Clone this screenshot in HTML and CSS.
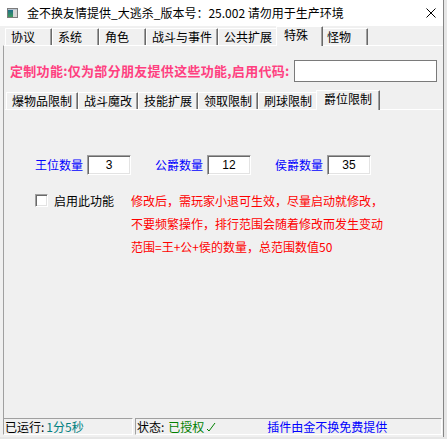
FILE: index.html
```html
<!DOCTYPE html>
<html lang="zh-CN">
<head>
<meta charset="utf-8">
<title>金不换友情提供_大逃杀_版本号：25.002 请勿用于生产环境</title>
<link rel="stylesheet" href="styles.css">
</head>
<body>
<div class="window">
  <div class="titlebar">
    <svg class="app-icon" width="11" height="10" viewBox="0 0 11 10">
      <defs>
        <linearGradient id="pane" x1="0" y1="0" x2="0" y2="1">
          <stop offset="0" stop-color="#1f6f8b"/>
          <stop offset="1" stop-color="#3f9a5a"/>
        </linearGradient>
      </defs>
      <rect x="0.5" y="0.5" width="10" height="9" fill="#e8e8e8" stroke="#7c7c7c"/>
      <rect x="1" y="1" width="9" height="1" fill="#b8c4d0"/>
      <rect x="1" y="2" width="5" height="7" fill="url(#pane)"/>
      <rect x="6" y="2" width="4" height="7" fill="#d6d6d6"/>
    </svg>
    <span class="title">金不换友情提供_大逃杀_版本号：25.002 请勿用于生产环境</span>
    <svg class="close" width="10" height="10" viewBox="0 0 10 10">
      <path d="M0.5 0.5 L9.5 9.5 M9.5 0.5 L0.5 9.5" stroke="#000" stroke-width="1" fill="none"/>
    </svg>
  </div>

  <div class="tabstrip">
    <div class="tab">协议</div>
    <div class="tab">系统</div>
    <div class="tab">角色</div>
    <div class="tab">战斗与事件</div>
    <div class="tab">公共扩展</div>
    <div class="tab is-active">特殊</div>
    <div class="tab">怪物</div>
  </div>

  <div class="page">
    <div class="custom">
      <span class="custom-label">定制功能:仅为部分朋友提供这些功能,启用代码:</span>
      <input class="code-input" type="text" value="">
    </div>

    <div class="tabstrip tabstrip--inner">
      <div class="tab">爆物品限制</div>
      <div class="tab">战斗魔改</div>
      <div class="tab">技能扩展</div>
      <div class="tab">领取限制</div>
      <div class="tab">刷球限制</div>
      <div class="tab is-active">爵位限制</div>
    </div>

    <div class="subpage">
      <div class="fields">
        <label class="field"><span class="field-label">王位数量</span><input class="num" type="text" value="3"></label>
        <label class="field"><span class="field-label">公爵数量</span><input class="num" type="text" value="12"></label>
        <label class="field"><span class="field-label">侯爵数量</span><input class="num" type="text" value="35"></label>
      </div>

      <div class="options">
        <label class="check">
          <span class="check-box"></span>
          <span>启用此功能</span>
        </label>
        <div class="notes">
          <div>修改后，需玩家小退可生效，尽量启动就修改，</div>
          <div>不要频繁操作，排行范围会随着修改而发生变动</div>
          <div>范围=王+公+侯的数量，总范围数值50</div>
        </div>
      </div>
    </div>
  </div>

  <div class="statusbar">
    <div class="status-cell status-cell--time">
      <span>已运行:</span><span class="uptime">1分5秒</span>
    </div>
    <div class="status-cell status-cell--state">
      <span>状态:</span>
      <span class="auth">已授权<svg class="tick" width="10" height="10" viewBox="0 0 10 10"><polyline points="1,7 3,9 9,1" fill="none" stroke="#008000" stroke-width="1"/></svg></span>
      <span class="credit">插件由金不换免费提供</span>
    </div>
  </div>
</div>
</body>
</html>
```

FILE: styles.css
```css
* {
  box-sizing: border-box;
}

html,
body {
  margin: 0;
}

body {
  background: #e6e6e6;
  font-family: "Noto Sans CJK SC", "Liberation Sans", sans-serif;
  font-size: 12px;
  color: #000;
}

/* window frame */
.window {
  width: 444px;
  height: 437px;
  background: #f0f0f0;
  border-right: 1px solid #858585;
  display: flex;
  flex-direction: column;
}

.titlebar {
  height: 26px;
  flex: none;
  background: #fff;
  display: flex;
  align-items: center;
  padding-left: 7px;
}

.app-icon {
  flex: none;
  margin-right: 9px;
}

.title {
  flex: 1;
  line-height: 14px;
  white-space: nowrap;
}

.close {
  flex: none;
  margin-right: 7px;
}

/* classic tab strips */
.tabstrip {
  height: 19px;
  flex: none;
  display: flex;
  align-items: flex-end;
  padding-left: 5px;
}

.tab {
  height: 17px;
  min-width: 47px;
  padding: 0 5px;
  border-top: 1px solid #fff;
  border-left: 1px solid #fff;
  border-right: 1px solid #696969;
  box-shadow: inset -1px 0 #a0a0a0;
  border-top-left-radius: 1px;
  border-top-right-radius: 1px;
  line-height: 15px;
  white-space: nowrap;
}

.tab.is-active {
  position: relative;
  z-index: 1;
  height: 20px;
  margin: 0 -2px -1px;
  padding: 0 7px;
  background: #f0f0f0;
  line-height: 16px;
}

.tab.is-active + .tab {
  border-left-color: #f0f0f0;
}

.page {
  flex: 1;
  margin-left: 3px;
  border-top: 1px solid #fff;
  border-left: 1px solid #a0a0a0;
  display: flex;
  flex-direction: column;
}

/* custom code row */
.custom {
  display: flex;
  align-items: center;
  height: 22px;
  margin: 14px 6px 0;
}

.custom-label {
  color: #ff3f80;
  font-size: 13px;
  font-weight: bold;
  letter-spacing: 0.3px;
  line-height: 16px;
  white-space: nowrap;
}

.code-input {
  margin-left: auto;
  width: 143px;
  height: 22px;
  border: 1px solid #7a7a7a;
  background: #fff;
  padding: 0 3px;
  font: inherit;
  outline: none;
}

.tabstrip--inner {
  margin-top: 8px;
  padding-left: 2px;
}

.subpage {
  flex: 1;
  margin-left: 1px;
  border-top: 1px solid #fff;
}

/* count fields */
.fields {
  display: flex;
  gap: 24px;
  margin-top: 45px;
  padding-left: 30px;
}

.field {
  display: flex;
  align-items: center;
  gap: 4px;
}

.field-label {
  color: #0000ff;
  line-height: 16px;
}

.num {
  width: 44px;
  height: 20px;
  padding: 0;
  background: #fff;
  border-top: 1px solid #a0a0a0;
  border-left: 1px solid #a0a0a0;
  border-bottom: 1px solid #fff;
  border-right: 1px solid #fff;
  box-shadow: inset 1px 1px #696969, inset -1px -1px #e3e3e3;
  font-family: "Liberation Sans", sans-serif;
  font-size: 12px;
  color: #000;
  text-align: center;
  outline: none;
}

/* enable switch + notes */
.options {
  display: flex;
  align-items: flex-start;
  margin-top: 14px;
  padding-left: 30px;
}

.check {
  display: flex;
  align-items: center;
  gap: 6px;
  height: 23px;
}

.check-box {
  width: 13px;
  height: 13px;
  background: #fff;
  border-top: 1px solid #a0a0a0;
  border-left: 1px solid #a0a0a0;
  border-bottom: 1px solid #fff;
  border-right: 1px solid #fff;
  box-shadow: inset 1px 1px #696969, inset -1px -1px #e3e3e3;
}

.notes {
  margin-left: 17px;
  color: #ff0000;
  line-height: 23px;
  white-space: nowrap;
}

/* status bar */
.statusbar {
  height: 19px;
  flex: none;
  display: flex;
  gap: 2px;
  padding: 0 1px 2px 3px;
}

.status-cell {
  display: flex;
  align-items: center;
  height: 17px;
  padding-left: 1px;
  border-top: 1px solid #a0a0a0;
  border-left: 1px solid #a0a0a0;
  border-bottom: 1px solid #fff;
  border-right: 1px solid #fff;
  line-height: 15px;
  white-space: nowrap;
}

.status-cell--time {
  width: 130px;
}

.status-cell--state {
  flex: 1;
}

.uptime {
  margin-left: 2px;
  color: #008080;
}

.auth {
  display: flex;
  align-items: center;
  width: 99px;
  margin-left: 4px;
  color: #008000;
}

.tick {
  margin-left: 2px;
}

.credit {
  color: #0000ff;
}
```
